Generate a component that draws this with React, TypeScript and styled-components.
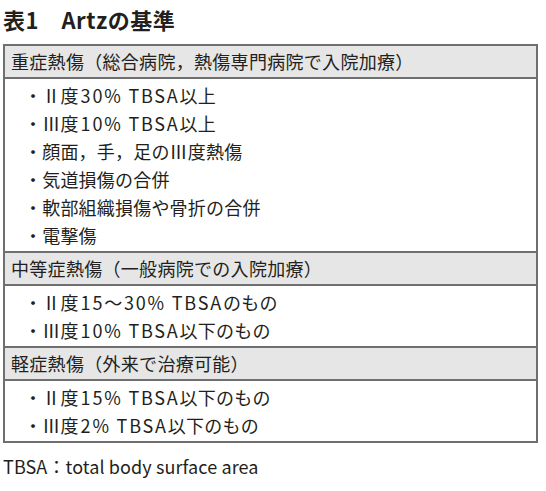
import styled, { createGlobalStyle } from "styled-components";

const GlobalStyle = createGlobalStyle`
  html, body {
    margin: 0;
    padding: 0;
    background: #ffffff;
  }
  body {
    font-family: "Noto Sans CJK JP", "Noto Sans", sans-serif;
    color: #231f20;
  }
`;

const Page = styled.div`
  width: 546px;
  height: 491px;
  padding: 4px 8px 0 3px;
  box-sizing: border-box;
`;

const Title = styled.h1`
  margin: 0 0 10px;
  font-size: 22px;
  line-height: 30px;
  font-weight: 700;
  letter-spacing: 0.5px;
`;

const Table = styled.div`
  width: 535px;
  box-sizing: border-box;
  border: 2px solid #6f6f6f;
`;

const SectionHead = styled.div`
  background: #e6e6e6;
  height: 31px;
  line-height: 31px;
  padding-left: 6px;
  font-size: 18px;
  letter-spacing: 0.3px;
  border-bottom: 2px solid #6f6f6f;
`;

const ItemList = styled.ul<{ $last?: boolean }>`
  list-style: none;
  margin: 0;
  padding: 2px 0 2px 19px;
  border-bottom: ${(p) => (p.$last ? "none" : "2px solid #6f6f6f")};
`;

const Item = styled.li`
  font-size: 18px;
  line-height: 28px;
  height: 28px;
  letter-spacing: 0.2px;
`;

const Latin = styled.span`
  letter-spacing: 1.8px;
  padding-left: 2px;
`;

const Footnote = styled.p`
  margin: 9px 0 0;
  font-size: 18px;
  line-height: 28px;
  letter-spacing: 0.1px;
`;

const sections = [
  {
    head: "重症熱傷（総合病院，熱傷専門病院で入院加療）",
    items: [
      "・Ⅱ度30% TBSA以上",
      "・Ⅲ度10% TBSA以上",
      "・顔面，手，足のⅢ度熱傷",
      "・気道損傷の合併",
      "・軟部組織損傷や骨折の合併",
      "・電撃傷",
    ],
  },
  {
    head: "中等症熱傷（一般病院での入院加療）",
    items: ["・Ⅱ度15～30% TBSAのもの", "・Ⅲ度10% TBSA以下のもの"],
  },
  {
    head: "軽症熱傷（外来で治療可能）",
    items: ["・Ⅱ度15% TBSA以下のもの", "・Ⅲ度2% TBSA以下のもの"],
  },
];

function renderItem(text: string) {
  return text
    .split(/([0-9A-Z%～ ]+)/)
    .map((part, i) => (i % 2 === 1 ? <Latin key={i}>{part}</Latin> : part));
}

export default function App() {
  return (
    <>
      <GlobalStyle />
      <Page>
        <Title>表1　Artzの基準</Title>
        <Table>
          {sections.map((s, i) => (
            <div key={s.head}>
              <SectionHead>{s.head}</SectionHead>
              <ItemList $last={i === sections.length - 1}>
                {s.items.map((t) => (
                  <Item key={t}>{renderItem(t)}</Item>
                ))}
              </ItemList>
            </div>
          ))}
        </Table>
        <Footnote>TBSA：total body surface area</Footnote>
      </Page>
    </>
  );
}
